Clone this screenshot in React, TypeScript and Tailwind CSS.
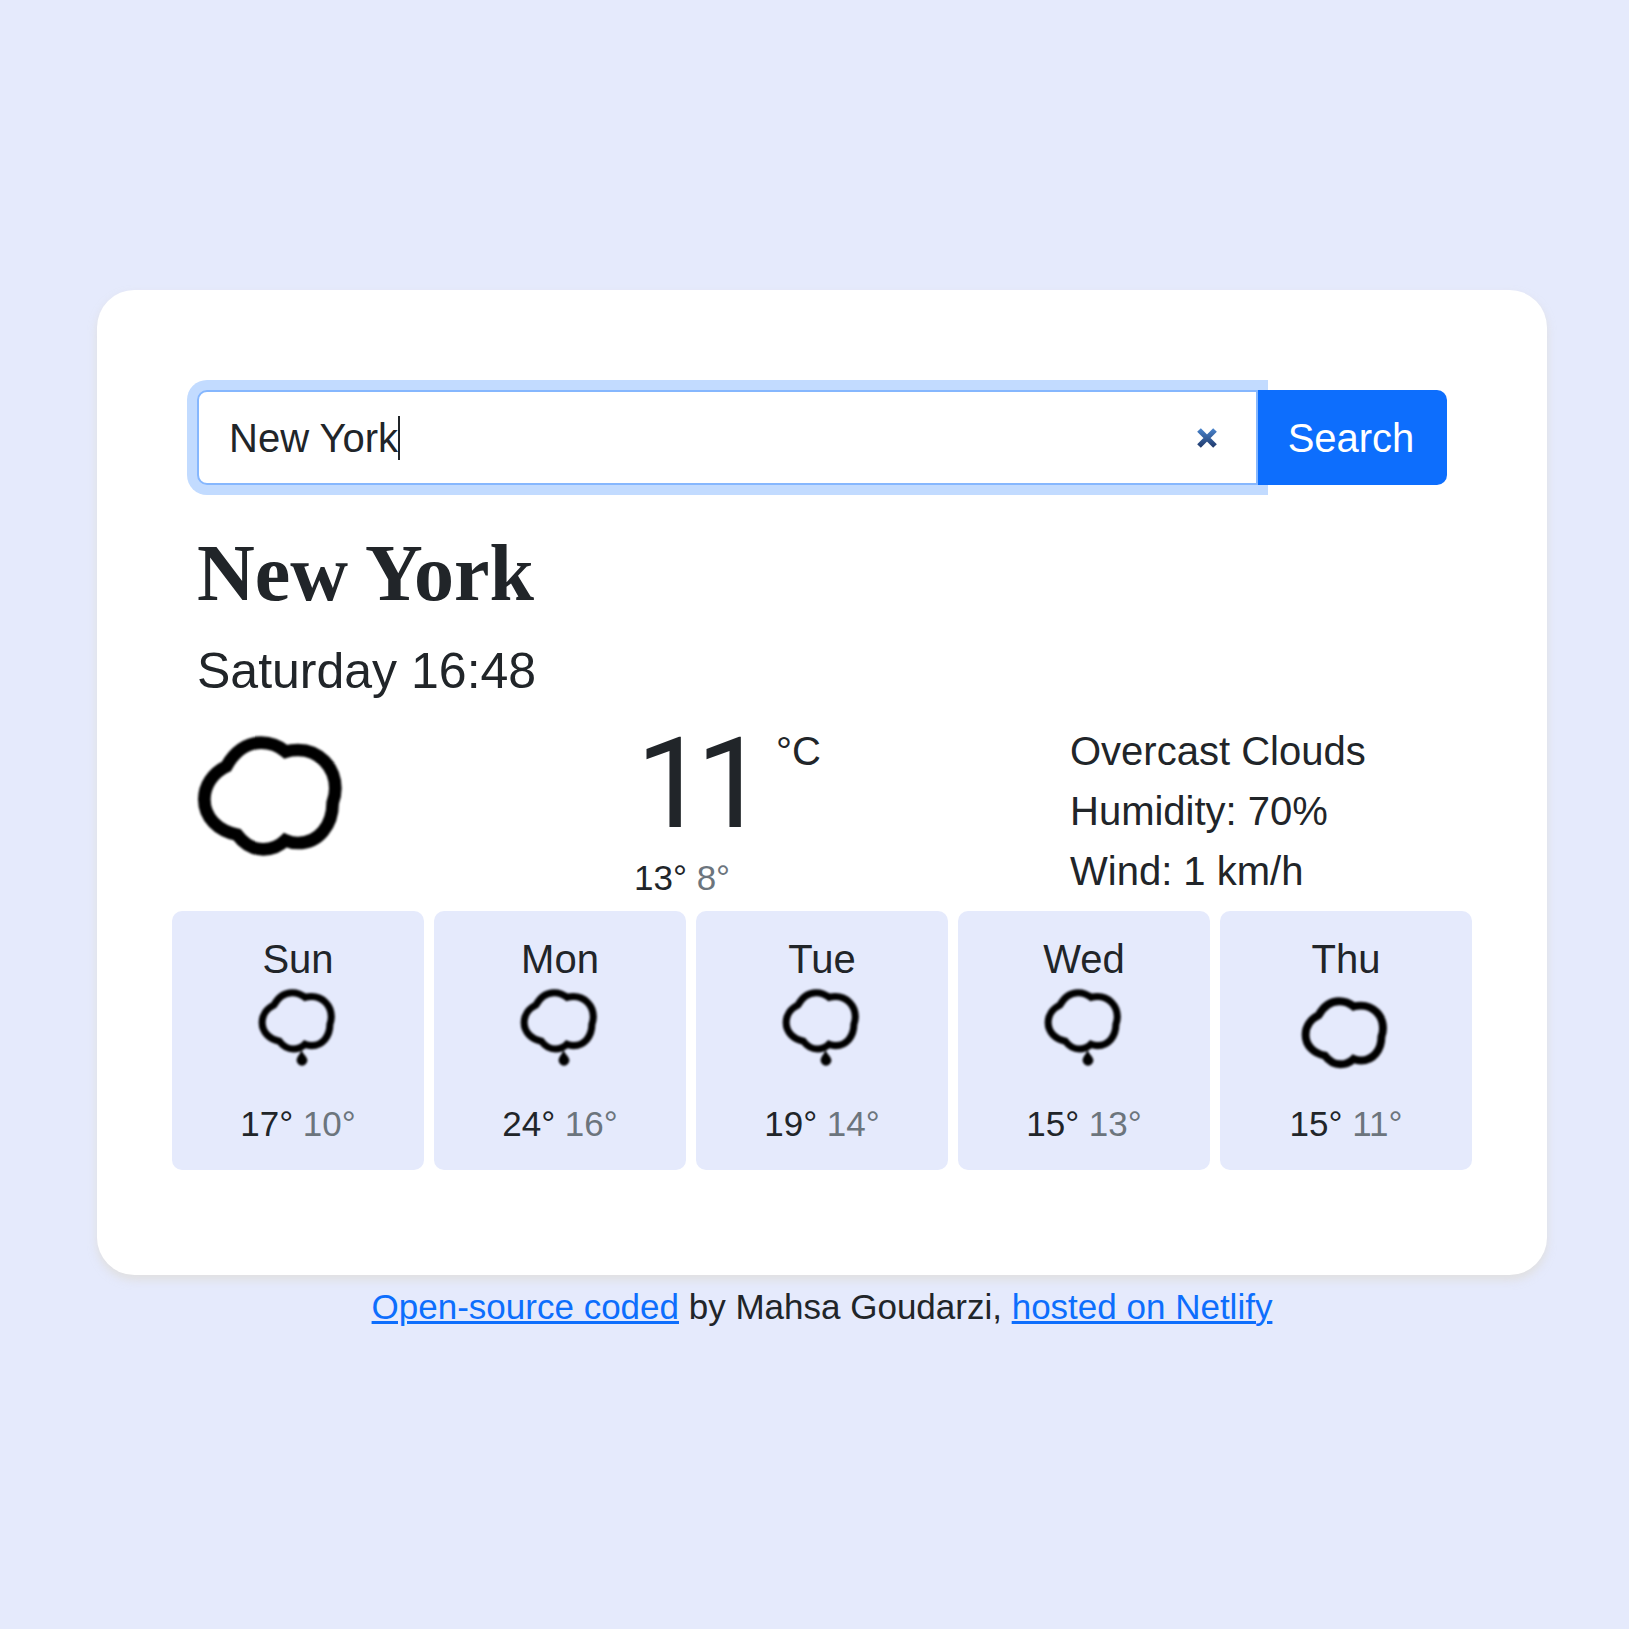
const CLOUD =
  "M139 139 C163 96 200 68 243 68 C272 68 297 78 317 95 C330 91 342 90 354 90 C416 90 466 140 466 205 C466 221 463 235 458 248 C458 316 416 369 354 369 C341 369 328 366 316 361 C298 379 274 388 250 388 C216 388 192 372 171 344 C114 332 73 293 73 238 C73 197 98 159 139 139 Z";

function MainCloud() {
  return (
    <svg className="-ml-[17px] -mt-px block h-[150px] w-[180px] blur-[0.9px]" viewBox="0 0 540 450" fill="none">
      <path d={CLOUD} stroke="#000" strokeWidth="38" />
    </svg>
  );
}

function DayIcon({ rain }: { rain: boolean }) {
  return (
    <svg className="block h-[108px] w-[108px] blur-[0.9px]" viewBox="0 0 108 108" fill="none">
      {rain ? (
        <>
          <path d={CLOUD} transform="translate(5.3 -8.3) scale(.176)" stroke="#000" strokeWidth="40" />
          <path d="M57.5 60 C58 65 63.4 67.5 63.4 71.3 A5.4 5.4 0 0 1 52.6 71.3 C52.6 67.5 57 65 57.5 60 Z" fill="#000" />
        </>
      ) : (
        <path d={CLOUD} transform="translate(-.8 -1.15) scale(.197)" stroke="#000" strokeWidth="40" />
      )}
    </svg>
  );
}

const DAYS = [
  { name: "Sun", max: 17, min: 10, rain: true },
  { name: "Mon", max: 24, min: 16, rain: true },
  { name: "Tue", max: 19, min: 14, rain: true },
  { name: "Wed", max: 15, min: 13, rain: true },
  { name: "Thu", max: 15, min: 11, rain: false },
];

export default function App() {
  return (
    <div className="min-h-[1629px] w-[1629px] bg-[#e5eafc] pt-[290px] pl-[97px] font-['Liberation_Sans',Arial,sans-serif] text-[40px] leading-[60px] text-[#212529]">
      <main className="h-[985px] w-[1450px] rounded-[37.5px] bg-white px-[100px] pt-[100px] shadow-[0_5px_10px_rgba(216,206,176,0.36)]">
        <form className="flex h-[95px]">
          <div className="flex w-[1061px] items-center rounded-l-[10px] border-2 border-[#86b7fe] bg-white pr-[38px] pl-[30px] shadow-[0_0_0_10px_#c2dbff]">
            <span>New York</span>
            <span className="h-[44px] w-[2px] bg-[#212529]" />
            <svg className="mt-px ml-auto h-[22px] w-[22px] blur-[0.4px]" viewBox="0 0 22 22" fill="none">
              <defs>
                <linearGradient id="clear" x1="0" y1="1" x2="0" y2="21" gradientUnits="userSpaceOnUse">
                  <stop stopColor="#4a86cf" />
                  <stop offset="1" stopColor="#1f3768" />
                </linearGradient>
              </defs>
              <path d="M3 3 L19 19 M19 3 L3 19" stroke="url(#clear)" strokeWidth="5.2" />
            </svg>
          </div>
          <button type="button" className="relative w-[189px] rounded-r-[10px] bg-[#0d6efd] pr-[3px] text-white">
            Search
          </button>
        </form>

        <h1 className="mt-[40px] font-['Liberation_Serif','Times_New_Roman',serif] text-[80px] leading-[96px] font-bold">
          New York
        </h1>
        <h2 className="mt-[20px] text-[50px] leading-[60px]">Saturday 16:48</h2>

        <section className="mt-[20px] flex h-[180px]">
          <div className="w-[437px] shrink-0">
            <MainCloud />
          </div>
          <div className="w-[436px] shrink-0">
            <div className="flex h-[125px] items-start">
              <span className="w-[142px] pl-[2px] font-['Roboto',sans-serif] text-[126px] leading-[127px] tracking-[-10.8px]">11</span>
              <span>°C</span>
            </div>
            <div className="mt-[5px] text-[35px] leading-[53px]">
              13° <span className="text-[#6c757d]">8°</span>
            </div>
          </div>
          <ul className="whitespace-nowrap">
            <li>Overcast Clouds</li>
            <li>Humidity: 70%</li>
            <li>Wind: 1 km/h</li>
          </ul>
        </section>

        <section className="-mx-[25px] mt-[10px] grid grid-cols-5 gap-[10px]">
          {DAYS.map((d) => (
            <article key={d.name} className="flex h-[259px] flex-col items-center rounded-[10px] bg-[#e5eafc] pt-[18px]">
              <div>{d.name}</div>
              <DayIcon rain={d.rain} />
              <div className="text-[35px] leading-[53px]">
                {d.max}° <span className="text-[#6c757d]">{d.min}°</span>
              </div>
            </article>
          ))}
        </section>
      </main>
      <footer className="mt-[6px] w-[1450px] text-center text-[35px] leading-[52px]">
        <a className="text-[#0d6efd] underline decoration-[3px]">Open-source coded</a> by Mahsa Goudarzi,{" "}
        <a className="text-[#0d6efd] underline decoration-[3px]">hosted on Netlify</a>
      </footer>
    </div>
  );
}
